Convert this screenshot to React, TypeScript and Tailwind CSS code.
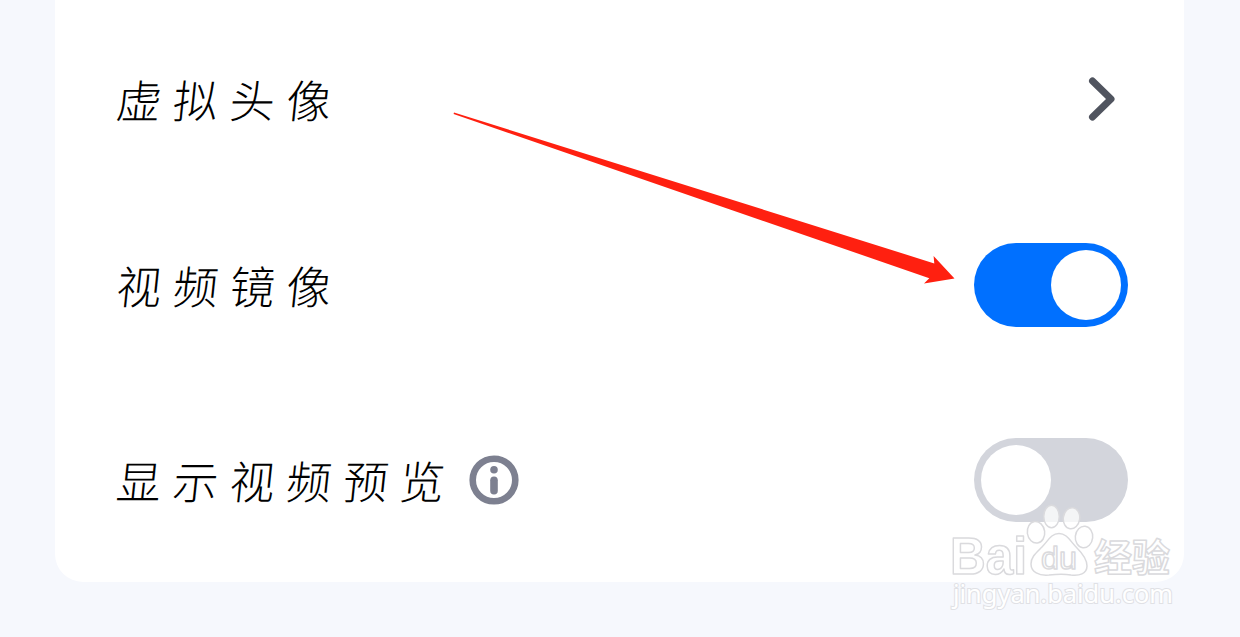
import React, { useState } from 'react';

interface ToggleProps {
    label: string;
    checked: boolean;
    onChange: (checked: boolean) => void;
}

const Toggle: React.FC<ToggleProps> = ({ label, checked, onChange }) => (
    <button
        role="switch"
        aria-checked={checked}
        aria-label={label}
        onClick={() => onChange(!checked)}
        className={`flex h-[84px] w-[154px] items-center rounded-full p-[7px] ${
            checked ? 'justify-end bg-[#0070ff]' : 'justify-start bg-[#d3d5dc]'
        }`}
    >
        <span className="size-[70px] rounded-full bg-white" />
    </button>
);

const Label: React.FC<{ children: React.ReactNode }> = ({ children }) => (
    <span className="-skew-x-6 whitespace-nowrap font-['Noto_Sans_CJK_SC',sans-serif] text-[45px] leading-[60px] font-light tracking-[11.6px] text-black">
        {children}
    </span>
);

const InfoIcon = () => (
    <svg className="ml-[12px] size-[50px]" viewBox="0 0 50 50" fill="none">
        <circle cx="25" cy="25" r="21.3" stroke="#7d8090" strokeWidth="6.6" />
        <circle cx="25" cy="14.8" r="3.8" fill="#7d8090" />
        <rect x="21.2" y="21.5" width="7.6" height="18" rx="3.8" fill="#7d8090" />
    </svg>
);

const ChevronIcon = () => (
    <svg className="mr-[11px] h-[46px] w-[30px]" viewBox="0 0 30 46" fill="none">
        <path
            d="M5.5 5 L24 23 L5.5 41"
            stroke="#50545f"
            strokeWidth="7"
            strokeLinecap="round"
            strokeLinejoin="round"
        />
    </svg>
);

const Arrow = () => (
    <svg
        className="pointer-events-none absolute top-[105px] left-[450px]"
        width="510"
        height="185"
        viewBox="450 105 510 185"
    >
        <path
            d="M454 112.4 L934.3 263.4 L933.6 256 L954.5 278.6 L924 283.6 L929.3 278.2 L453.6 114 Z"
            fill="#ff2010"
        />
    </svg>
);

const Watermark = () => (
    <svg
        className="pointer-events-none absolute top-[495px] left-[940px]"
        width="245"
        height="125"
        viewBox="0 0 245 125"
    >
        <g
            fill="#ffffff"
            fillOpacity="0.75"
            stroke="#dadadd"
            strokeWidth="1.5"
            strokeLinejoin="round"
        >
            <text x="10" y="79" fontFamily="Liberation Sans" fontWeight="bold" fontSize="51" textLength="77" lengthAdjust="spacingAndGlyphs">
                Bai
            </text>
            <ellipse cx="96" cy="37.3" rx="8.7" ry="10.8" transform="rotate(-8 96 37.3)" />
            <ellipse cx="111.5" cy="21.5" rx="7.8" ry="11.2" />
            <ellipse cx="131.5" cy="23.2" rx="8.2" ry="10.6" transform="rotate(8 131.5 23.2)" />
            <ellipse cx="144" cy="42" rx="8.7" ry="10.8" transform="rotate(6 144 42)" />
            <path d="M119 38.5 C127 38.5 130 46 137 53 C143 59 147 64 147 71 C147 79 139 81 131 80 C123 78.5 117 79 109 80 C99 81 91 77 91 69 C91 62 96 58 102 52 C108 46 111 38.5 119 38.5 Z" />
            <text x="101" y="74" fontFamily="Liberation Sans" fontSize="31" textLength="36" lengthAdjust="spacingAndGlyphs">
                du
            </text>
            <text x="154" y="76" fontFamily="Noto Sans CJK SC" fontWeight="bold" fontSize="38" textLength="76" lengthAdjust="spacingAndGlyphs">
                经验
            </text>
        </g>
        <text
            x="13"
            y="108"
            fontFamily="Noto Sans"
            fontSize="25"
            textLength="220"
            lengthAdjust="spacingAndGlyphs"
            fill="#ffffff"
            stroke="#e0e1e5"
            strokeWidth="2"
            paintOrder="stroke"
        >
            jingyan.baidu.com
        </text>
    </svg>
);

export default function App() {
    const [mirror, setMirror] = useState(true);
    const [preview, setPreview] = useState(false);

    return (
        <div className="relative h-[637px] w-[1240px] overflow-hidden bg-[#f6f8fd] pr-[56px] pl-[55px]">
            <div className="flex h-[582px] flex-col rounded-b-[28px] bg-white pt-[57px] pr-[56px] pl-[62px]">
                <div className="flex h-[84px] items-center justify-between">
                    <Label>虚拟头像</Label>
                    <ChevronIcon />
                </div>
                <div className="mt-[102px] flex h-[84px] items-center justify-between">
                    <Label>视频镜像</Label>
                    <Toggle label="视频镜像" checked={mirror} onChange={setMirror} />
                </div>
                <div className="mt-[111px] flex h-[84px] items-center justify-between">
                    <div className="flex items-center">
                        <Label>显示视频预览</Label>
                        <InfoIcon />
                    </div>
                    <Toggle label="显示视频预览" checked={preview} onChange={setPreview} />
                </div>
            </div>
            <Arrow />
            <Watermark />
        </div>
    );
}
